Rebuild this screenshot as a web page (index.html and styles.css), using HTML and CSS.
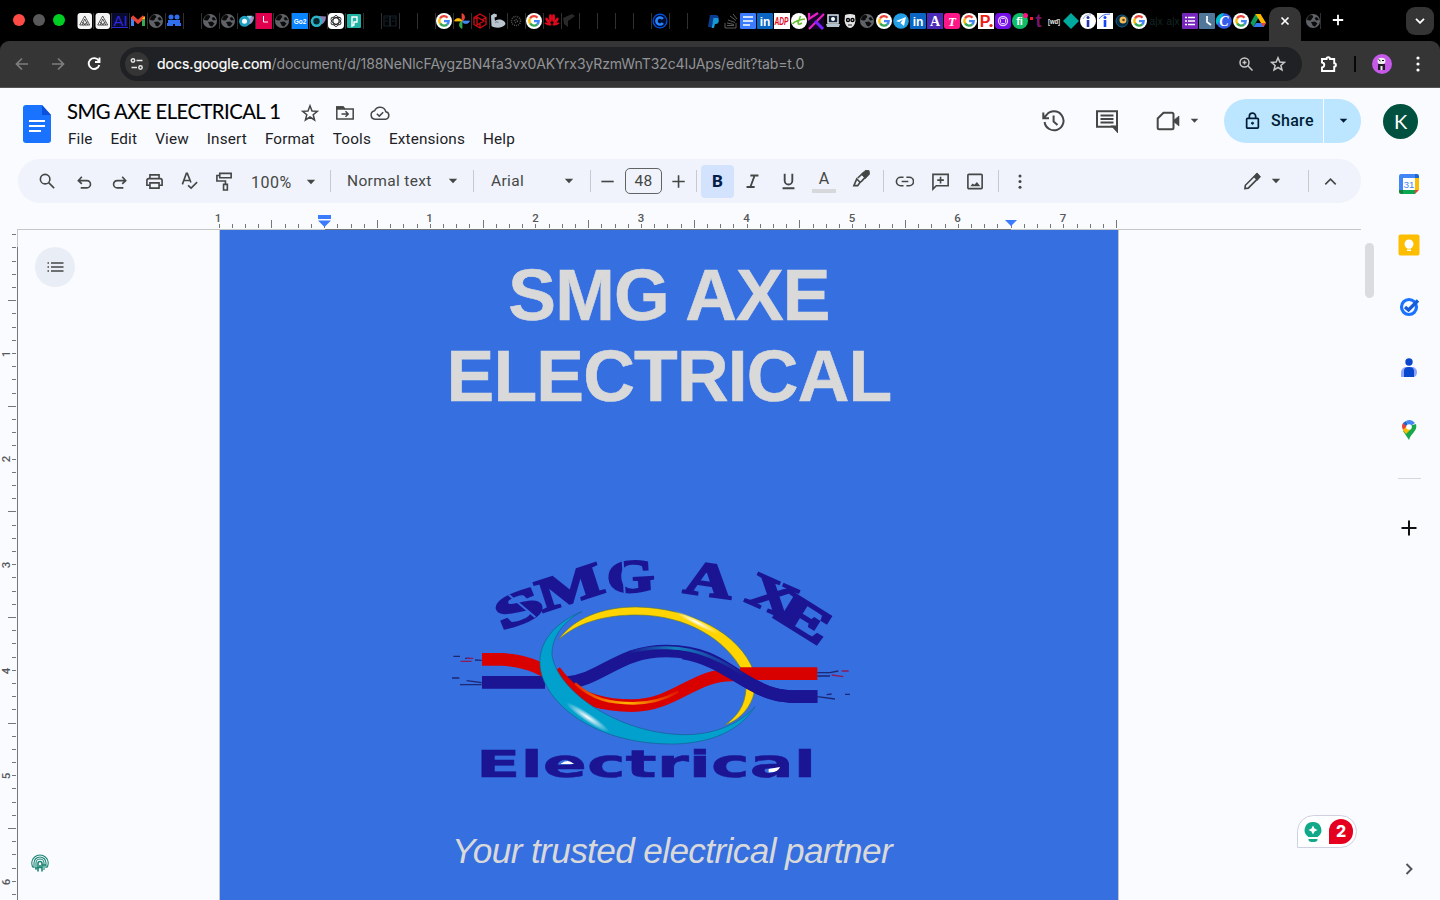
FILE: index.html
```html
<!DOCTYPE html>
<html lang="en">
<head>
<meta charset="utf-8">
<title>SMG AXE ELECTRICAL 1</title>
<link rel="stylesheet" href="styles.css">
</head>
<body>
<svg class="defs" width="0" height="0">
  <symbol id="globe" viewBox="0 0 16 16"><circle cx="8" cy="8" r="7" fill="#5f6368"/><path d="M4 2.500C7 1 9 3 8 4.500 6 6 7 8 4.500 7.500L2 7Q2 4 4 2.500ZM9.500 5L12 4 14 7 11 7.500ZM6 9L10 8.500 12.500 10.500 10 13.500 8 13Z" fill="#0b0b0b"/></symbol>
  <symbol id="goog" viewBox="0 0 16 16"><circle cx="8" cy="8" r="8" fill="#fff"/><g fill="none" stroke-width="2.300"><path d="M4 5.500A4.700 4.700 0 0 1 11.500 4.700" stroke="#ea4335"/><path d="M4.300 10.600A4.700 4.700 0 0 1 4 5.500" stroke="#fbbc05"/><path d="M11.300 11.300A4.700 4.700 0 0 1 4.200 10.500" stroke="#34a853"/><path d="M8 8.100H12.700A4.700 4.700 0 0 1 11.200 11.400" stroke="#4285f4"/></g></symbol>
  <symbol id="tri" viewBox="0 0 16 16"><rect x="1.500" width="14.500" height="16" rx="3" fill="#f4f4f4"/><path d="M8.700 3L3.700 12H13.700ZM8.700 6L6.200 12M8.700 6L11.700 12M5.700 9L9.700 12M11.700 9L7.700 12" fill="none" stroke="#333" stroke-width=".8"/></symbol>
  <symbol id="caret" viewBox="0 0 10 6"><path d="M.8.8H9.200L5 5.200Z" fill="currentColor"/></symbol>
</svg>

<header class="chrome">
  <div class="tabstrip">
    <div class="lights"><i class="red"></i><i class="grey"></i><i class="green"></i></div>
    <div class="tabs wide">
      <span><svg><use href="#tri"/></svg></span>
      <span><svg><use href="#tri"/></svg></span>
      <span><svg viewBox="0 0 16 16"><rect width="16" height="15" fill="#080a30"/><text x="8.500" y="13" class="fav" font-size="15" fill="#3028d8">AI</text><path d="M0 14.500H16" stroke="#3028d8"/></svg></span>
      <span><svg viewBox="0 0 16 16"><path d="M2.500 13V4" stroke="#4285f4" stroke-width="3"/><path d="M13.500 13V4" stroke="#34a853" stroke-width="3"/><path d="M2 3.500L8 9 14 3.500" stroke="#ea4335" stroke-width="3.200" fill="none"/><path d="M12 5.500L15 3V6H12Z" fill="#fbbc04"/></svg></span>
      <span><svg><use href="#globe"/></svg></span>
      <span><svg viewBox="0 0 16 16" fill="#2f6fed"><circle cx="5" cy="4" r="2.500"/><circle cx="11" cy="4" r="2.500"/><path d="M2 7H14V11H2ZM1 10H7V13H1ZM9 10H15V13H9Z"/></svg></span>
      <span></span>
      <span><svg><use href="#globe"/></svg></span>
      <span><svg><use href="#globe"/></svg></span>
      <span><svg viewBox="0 0 16 16"><path d="M9 3L16 3.500C16 8 13 12 9 12Z" fill="#a58fc0"/><path d="M9 2.800H14.500L10 8Z" fill="#8fdcec"/><circle cx="6.500" cy="8.300" r="4" fill="#fff" stroke="#1f9fbf" stroke-width="3"/></svg></span>
      <span><svg viewBox="0 0 16 16"><rect width="16" height="16" fill="#e0004d"/><path d="M7.500 3V9H12" stroke="#fff" fill="none"/></svg></span>
      <span><svg><use href="#globe"/></svg></span>
      <span><svg viewBox="0 0 16 16"><rect width="16" height="16" fill="#0a84ff"/><text x="8" y="10.500" class="fav bold" font-size="6.500" fill="#fff">Go2</text></svg></span>
      <span><svg viewBox="0 0 16 16"><path d="M9 3L16 3.500C16 8 13 12 9 12Z" fill="#8c7bb0"/><circle cx="6.500" cy="8.300" r="4.500" fill="#072730" stroke="#2bb5c6" stroke-width="2.600"/></svg></span>
      <span><svg viewBox="0 0 16 16"><rect width="16" height="16" rx="4" fill="#fff"/><g fill="none" stroke="#222" stroke-width=".9"><ellipse cx="8" cy="8" rx="3" ry="5.500"/><ellipse cx="8" cy="8" rx="3" ry="5.500" transform="rotate(60 8 8)"/><ellipse cx="8" cy="8" rx="3" ry="5.500" transform="rotate(120 8 8)"/></g></svg></span>
      <span><svg viewBox="0 0 16 16"><rect x="1" y="1" width="14" height="14" rx="1" fill="#21b2a6"/><path d="M6 13V4H11V9H8V12Z" fill="none" stroke="#fff" stroke-width="1.400"/></svg></span>
      <span></span>
      <span><svg viewBox="0 0 16 16"><path d="M2 3H7.500V13H2ZM8.500 3H14V13H8.500ZM3 5H6M3 8H6M10 5H13M10 8H13" fill="none" stroke="#172129" stroke-width="1.200"/></svg></span>
      <span></span><span></span>
      <span><svg><use href="#goog"/></svg></span>
      <span><svg viewBox="0 0 16 16"><path d="M8 .5A4 4 0 0 1 8 8Z" fill="#ea4335" stroke="#ea4335" stroke-width=".8"/><path d="M15.500 8A4 4 0 0 1 8 8Z" fill="#4285f4" stroke="#4285f4" stroke-width=".8"/><path d="M8 15.500A4 4 0 0 1 8 8Z" fill="#34a853" stroke="#34a853" stroke-width=".8"/><path d="M.5 8A4 4 0 0 1 8 8Z" fill="#fbbc04" stroke="#fbbc04" stroke-width=".8"/></svg></span>
      <span><svg viewBox="0 0 16 16" fill="none" stroke="#d40b12"><path d="M8 1L14 4.500V11.500L8 15 2 11.500V4.500ZM5 4V12L12 8ZM2 4.500L5 6M14 4.500L10 7M8 15V11" stroke-width="1.300"/></svg></span>
      <span><svg viewBox="0 0 16 16"><path d="M1 2.500L4 .5 7 1.500 6.500 4 4.500 4.500 5 8C8 5 15 6.500 15.500 11 13 15.500 5 15.500 1.500 13Z" fill="#bac5cf"/><path d="M5 10C7 8 8 9 8 10" stroke="#66788a" fill="none"/></svg></span>
      <span><svg viewBox="0 0 16 16" fill="none" stroke="#555" stroke-width="1.500" stroke-dasharray="1 1"><circle cx="8" cy="8" r="4.500"/><circle cx="8" cy="8" r="1.500"/></svg></span>
      <span><svg><use href="#goog"/></svg></span>
      <span><svg viewBox="0 0 16 16" fill="#e0081c"><ellipse cx="6.500" cy="5" rx="1.500" ry="4"/><ellipse cx="9.500" cy="5" rx="1.500" ry="4"/><ellipse cx="4" cy="8" rx="1.500" ry="4" transform="rotate(-35 4 8)"/><ellipse cx="12" cy="8" rx="1.500" ry="4" transform="rotate(35 12 8)"/><ellipse cx="4" cy="11" rx="3.500" ry="1.200" transform="rotate(15 4 11)"/><ellipse cx="12" cy="11" rx="3.500" ry="1.200" transform="rotate(-15 12 11)"/></svg></span>
      <span><svg viewBox="0 0 16 16"><path d="M1 5L10 1 13 3 6 8V14L2 11Z" fill="#292929"/></svg></span>
      <span></span><span></span><span></span><span></span>
      <span><svg viewBox="0 0 16 16"><circle cx="8" cy="8" r="7.500" fill="#0055e8"/><circle cx="8" cy="8" r="6.300" fill="#020e30"/><path d="M10.800 6A3.500 3.500 0 1 0 10.800 10" fill="none" stroke="#2584ff" stroke-width="2.600"/></svg></span>
      <span></span><span></span>
    </div>
    <div class="tabs">
      <span><svg viewBox="0 0 16 16"><path d="M4 2H9.500C15 2 13 10 8.500 10H6.500L5.500 14H2Z" fill="#0a3d91"/><path d="M7.500 5H12C14 9 12 11 9 11L8 15H5.500Z" fill="#1698d8"/></svg></span>
      <span><svg viewBox="0 0 16 16" fill="none" stroke="#5b5b5b"><path d="M2 10V15H13V10M4 12.500H11M4 10L11 11.500M5 7L12 9.500M7 3L13 7.500M10 1L14 6"/></svg></span>
      <span><svg viewBox="0 0 16 16"><rect width="16" height="16" rx="1" fill="#3b7cff"/><path d="M3 4H13M3 8H13M3 12H10" stroke="#fff" stroke-width="1.700"/></svg></span>
      <span><svg viewBox="0 0 16 16"><rect width="16" height="16" rx="1" fill="#0a66c2"/><text x="8" y="12.500" class="fav bold" font-size="12" fill="#fff">in</text></svg></span>
      <span><svg viewBox="0 0 16 16"><rect width="16" height="16" fill="#fff"/><text x="7.500" y="12" class="fav bold it" font-size="10" textLength="14" lengthAdjust="spacingAndGlyphs" fill="#e2061a">ADP</text></svg></span>
      <span><svg viewBox="0 0 16 16"><circle cx="8" cy="8" r="8" fill="#fff"/><path d="M1.500 11Q5 7 14 6M9.500 3L7 10Q7 12.500 11 10" fill="none" stroke="#6abf2e" stroke-width="1.500"/></svg></span>
      <span><svg viewBox="0 0 16 16"><rect width="16" height="16" fill="#15032b"/><path d="M1 0V6L10 0M1 16L16 1" stroke="#e621be" stroke-width="2.200" fill="none"/><path d="M7 8L15 16" stroke="#7a20ff" stroke-width="3"/></svg></span>
      <span><svg viewBox="0 0 16 16"><rect x="3" y="2" width="10" height="8" fill="#142235" stroke="#dbe4ec" stroke-width="1.500"/><circle cx="8" cy="6" r="2" fill="#fff"/><path d="M1 11H15L14 14H2Z" fill="#b6c4d0"/></svg></span>
      <span><svg viewBox="0 0 16 16"><path d="M3 2Q8 0 13 2L13.500 8Q12 15 8 15T2.500 8Z" fill="#e4e4e4"/><circle cx="6" cy="7" r="2.200"/><circle cx="10.500" cy="7" r="2.200"/><circle cx="6" cy="7" r=".8" fill="#fff"/><circle cx="10.500" cy="7" r=".8" fill="#fff"/><path d="M6 12H10" stroke="#222"/></svg></span>
      <span><svg><use href="#globe"/></svg></span>
      <span><svg><use href="#goog"/></svg></span>
      <span><svg viewBox="0 0 16 16"><circle cx="8" cy="8" r="7.800" fill="#229fe7"/><path d="M3 8L13 4 11 13 7.500 10 10 6.500 6 9Z" fill="#fff"/></svg></span>
      <span><svg viewBox="0 0 16 16"><rect width="16" height="16" rx="1" fill="#0a66c2"/><text x="8" y="12.500" class="fav bold" font-size="12" fill="#fff">in</text></svg></span>
      <span><svg viewBox="0 0 16 16"><rect width="16" height="16" fill="#4b2bb5"/><text x="8" y="13" class="fav serif bold" font-size="14" fill="#fff">A</text></svg></span>
      <span><svg viewBox="0 0 16 16"><rect width="16" height="16" rx="3" fill="#ff1688"/><text x="8" y="12.500" class="fav serif bold it" font-size="13" fill="#fff">T</text></svg></span>
      <span><svg><use href="#goog"/></svg></span>
      <span><svg viewBox="0 0 16 16"><rect width="16" height="16" fill="#fff"/><text x="7" y="14" class="fav bold" font-size="16" fill="#f01b16">P</text><circle cx="13" cy="12.500" r="1.600" fill="#f01b16"/></svg></span>
      <span><svg viewBox="0 0 16 16"><rect width="16" height="16" rx="4" fill="#7410e7"/><circle cx="8" cy="8" r="4.500" fill="none" stroke="#e4cbff" stroke-width="1.300"/><rect x="5.500" y="5.500" width="5" height="5" rx="1" fill="none" stroke="#e4cbff"/></svg></span>
      <span><svg viewBox="0 0 16 16"><circle cx="8" cy="8" r="8" fill="#12bd69"/><text x="7.500" y="12" class="fav bold" font-size="11" fill="#fff">fi</text><circle cx="13.500" cy="2.500" r="2.500" fill="#ff1486"/></svg></span>
      <span><svg viewBox="0 0 16 16"><text x="9.500" y="14" class="fav bold" font-size="18" fill="#75166b">t</text><rect x="1" y="4" width="3" height="3" fill="#ff1930"/></svg></span>
      <span><svg viewBox="0 0 16 16"><text x="8" y="10.500" class="fav bold" font-size="7.500" textLength="12" lengthAdjust="spacingAndGlyphs" fill="#eee">[wd]</text></svg></span>
      <span><svg viewBox="0 0 16 16"><path d="M8 0L16 8 8 16 0 8Z" fill="#00a99d"/></svg></span>
      <span><svg viewBox="0 0 16 16"><circle cx="8" cy="8" r="8" fill="#fff"/><path d="M8 7V14" stroke="#2535ae" stroke-width="2.600"/><circle cx="8" cy="4.500" r="1.500" fill="#2535ae"/><path d="M3 6Q5 1 11 2" fill="none" stroke="#8d96d4" stroke-width=".8"/></svg></span>
      <span><svg viewBox="0 0 16 16"><rect width="16" height="16" fill="#fff"/><path d="M8 7V14" stroke="#1447f4" stroke-width="2.600"/><circle cx="8" cy="4.500" r="1.500" fill="#1447f4"/><path d="M2 6Q5 1 13 1" fill="none" stroke="#1447f4" stroke-width=".8"/></svg></span>
      <span><svg viewBox="0 0 16 16"><circle cx="8" cy="8" r="6" fill="#072b45" stroke="#176089"/><circle cx="9" cy="7" r="3.500" fill="#f3bf5a"/><circle cx="9.500" cy="7" r="1.300" fill="#714012"/></svg></span>
      <span><svg><use href="#goog"/></svg></span>
      <span><svg viewBox="0 0 16 16"><text x="8" y="12" class="fav" font-size="10" fill="#152726">a|x</text></svg></span>
      <span><svg viewBox="0 0 16 16"><text x="8" y="12" class="fav" font-size="10" fill="#152726">a|x</text></svg></span>
      <span><svg viewBox="0 0 16 16"><rect width="16" height="16" rx="1" fill="#7627bb"/><path d="M3 4.500H5M3 8H5M3 11.500H5M6 4.500H13M6 8H13M6 11.500H13" stroke="#fff" stroke-width="1.500"/></svg></span>
      <span><svg viewBox="0 0 16 16"><rect width="16" height="16" rx="1" fill="#50779a"/><path d="M8 3V9L12 12" stroke="#fff" stroke-width="1.700" fill="none"/></svg></span>
      <span><svg viewBox="0 0 16 16"><circle cx="8" cy="8" r="7.800" fill="#355eea"/><path d="M8 .2A7.800 7.800 0 0 0 1 12Z" fill="#00bccb"/><text x="8" y="13" class="fav serif bold it" font-size="14" fill="#fff">C</text></svg></span>
      <span><svg><use href="#goog"/></svg></span>
      <span><svg viewBox="0 0 16 16"><path d="M5.500 1H10.500L3.500 14 .5 10Z" fill="#0f9d58"/><path d="M5.500 1H10.500L16 10H11Z" fill="#ffba00"/><path d="M3.500 14L6 10H16L13.500 14Z" fill="#3778ee"/><path d="M11 10H16L13.500 14Z" fill="#ea4335"/></svg></span>
    </div>
    <div class="activetab"><svg viewBox="0 0 10 10" width="10" height="10"><path d="M1.500 1.500L8.500 8.500M8.500 1.500L1.500 8.500" stroke="#fff" stroke-width="1.700"/></svg></div>
    <div class="tabs tail"><span><svg><use href="#globe"/></svg></span></div>
    <svg class="newtab" viewBox="0 0 12 12"><path d="M6 .8V11.200M.8 6H11.200" stroke="#fff" stroke-width="1.800"/></svg>
    <div class="tabmenu"><svg viewBox="0 0 10 6" width="10" height="6"><path d="M1 .8L5 4.800 9 .8" fill="none" stroke="#fff" stroke-width="1.800"/></svg></div>
  </div>
  <div class="navbar">
    <svg class="nav" viewBox="0 0 16 16"><path d="M14 8H2.500M8 2.500L2.500 8 8 13.500" stroke="#7e7e7e"/></svg>
    <svg class="nav fwd" viewBox="0 0 16 16"><path d="M2 8H13.500M8 2.500L13.500 8 8 13.500" stroke="#7e7e7e"/></svg>
    <svg class="nav rel" viewBox="0 0 16 16"><path d="M12.600 4.500A5.400 5.400 0 1 0 13.300 9M13.500 1.500V6H9" stroke="#fff" stroke-width="1.900"/></svg>
    <div class="omnibox">
      <div class="tune"><svg viewBox="0 0 14 14" width="14" height="14" fill="none" stroke="#e6e6e6" stroke-width="1.500"><circle cx="3" cy="3.500" r="1.700"/><path d="M6.500 3.500H12.500M1.500 10.500H7"/><circle cx="10.500" cy="10.500" r="1.700"/></svg></div>
      <div class="url"><b>docs.google.com</b><span>/document/d/188NeNlcFAygzBN4fa3vx0AKYrx3yRzmWnT32c4IJAps/edit?tab=t.0</span></div>
      <svg class="ob" viewBox="0 0 16 16"><circle cx="6.500" cy="6.500" r="4.500"/><path d="M9.800 9.800L14.500 14.500M4.500 6.500H8.500M6.500 4.500V8.500"/></svg>
      <svg class="ob" viewBox="0 0 16 16"><path d="M8 1.800L9.800 6.100 14.400 6.400 10.900 9.400 12 14 8 11.500 4 14 5.100 9.400 1.600 6.400 6.200 6.100Z"/></svg>
    </div>
    <svg class="puzzle" viewBox="0 0 18 18"><path d="M2 4H6.500A1.700 1.700 0 0 1 10 4H14.200V8.200A1.700 1.700 0 0 1 14.200 11.600V16H2V12.500C5 12 5 8 2 7.500Z" fill="none" stroke="#fff" stroke-width="1.900"/></svg>
    <i class="vbar"></i>
    <svg class="panda" viewBox="0 0 20 20"><circle cx="10" cy="10" r="10" fill="#c659ea"/><ellipse cx="9.500" cy="7" rx="4" ry="3.300" fill="#eee"/><path d="M6 10H13V16H6Z" fill="#241b28"/><path d="M8.500 12H10.500V16H8.500Z" fill="#eee"/><path d="M6.500 5.500L8.500 7M10 6.500H12" stroke="#111"/></svg>
    <svg class="dots" viewBox="0 0 4 16" fill="#fff"><circle cx="2" cy="2" r="1.600"/><circle cx="2" cy="8" r="1.600"/><circle cx="2" cy="14" r="1.600"/></svg>
  </div>
</header>

<div class="dochead">
  <svg class="doclogo" viewBox="0 0 28 38"><path d="M3 0H19L28 10V35A3 3 0 0 1 25 38H3A3 3 0 0 1 0 35V3A3 3 0 0 1 3 0Z" fill="#1a73ff"/><path d="M19 0L28 10H19Z" fill="#0b50d8"/><path d="M6 16H22M6 21H22M6 26H18" stroke="#fff" stroke-width="2"/></svg>
  <div class="titles">
    <div class="titlerow">
      <h1>SMG AXE ELECTRICAL 1</h1>
      <svg viewBox="0 0 20 20"><path d="M10 2.800L12 8 17.300 8.300 13.200 11.700 14.600 17 10 14 5.400 17 6.800 11.700 2.700 8.300 8 8Z"/></svg>
      <svg viewBox="0 0 20 20"><path d="M1.800 4H8L10 6H18.200V16H1.800Z"/><path d="M1.800 4H8L9 6H1.800Z" fill="#444746"/><path d="M6.500 11H13M10.500 8.300L13.200 11 10.500 13.700"/></svg>
      <svg viewBox="0 0 22 20" class="cloud"><path d="M6 16.200H16.500A3.800 3.800 0 0 0 16.800 8.700 6 6 0 0 0 5.600 7.700 4.300 4.300 0 0 0 6 16.200ZM7.800 10.800L10.300 13.100 14.200 9.200"/></svg>
    </div>
    <nav><span>File</span><span>Edit</span><span>View</span><span>Insert</span><span>Format</span><span>Tools</span><span>Extensions</span><span>Help</span></nav>
  </div>
  <div class="actions">
    <svg class="hist" viewBox="0 0 24 24"><path d="M3.600 13A9.500 9.500 0 1 0 5.500 6L2.500 9M2.300 3.500V9.200H8M12.600 6.500V12.500L16.500 16"/></svg>
    <svg class="comm" viewBox="0 0 24 24"><path d="M2 2.200H22V21L18.500 17.800H2Z"/><path d="M5.500 6.500H18.500M5.500 10H18.500M5.500 13.500H18.500"/><path d="M18 17.500H22V22Z" fill="#444746"/></svg>
    <svg class="meet" viewBox="0 0 24 24"><path d="M7.500 3.800H16A1.500 1.500 0 0 1 17.500 5.300V18.700A1.500 1.500 0 0 1 16 20.200H3.200A1.500 1.500 0 0 1 1.700 18.700V9.500Z"/><path d="M18 11L23 7V17L18 13Z" fill="#444746" stroke-width=".6"/></svg>
    <svg class="car" width="9" height="5.500"><use href="#caret"/></svg>
  </div>
  <div class="share"><div class="sharemain"><svg viewBox="0 0 16 20" width="15" height="18" fill="none" stroke="#001d35" stroke-width="1.900"><rect x="1.500" y="7" width="13" height="11" rx="1"/><path d="M4.500 7V4.800A3.500 3.500 0 0 1 11.500 4.800V7"/><circle cx="8" cy="12.500" r="1.200" fill="#001d35" stroke-width="1"/></svg><span>Share</span></div><div class="sharemore"><svg width="9" height="5.500"><use href="#caret"/></svg></div></div>
  <div class="avatar">K</div>
</div>

<div class="body">
 <main>
  <div class="toolbar">
    <div class="t w36"><svg viewBox="0 0 20 20"><circle cx="7.500" cy="7.500" r="5"/><path d="M11.200 11.200L17 17"/></svg></div>
    <div class="t w38 low"><svg viewBox="0 0 20 20"><path d="M4 8H12.500A3.800 3.800 0 0 1 12.500 15.600H6M7.200 4L3.500 8 7.200 11.500"/></svg></div>
    <div class="t w34 low"><svg viewBox="0 0 20 20"><path d="M15 8H6.500A3.800 3.800 0 0 0 6.500 15.600H13M11.800 4L15.500 8 11.800 11.500"/></svg></div>
    <div class="t w34"><svg viewBox="0 0 20 20"><path d="M5.200 7V3H14.800V7M5.200 14H2V9A2 2 0 0 1 4 7H16A2 2 0 0 1 18 9V14H14.800M5.200 11.500H14.800V17H5.200Z"/></svg></div>
    <div class="t w36"><svg viewBox="0 0 20 20"><path d="M2.500 13L6.700 1.500H7.700L11.500 11M4.200 9H10.500M8.500 14L11.700 17 18 10.700"/></svg></div>
    <div class="t w34"><svg viewBox="0 0 20 20"><path d="M5 1.500H17V6H5ZM5 3.700H2V9.500H11V13M9 13H13V19H9Z"/></svg></div>
    <div class="t zoomv"><span>100%</span><svg class="cr"><use href="#caret"/></svg></div><i></i>
    <div class="t style"><span>Normal text</span><svg class="cr"><use href="#caret"/></svg></div><i></i>
    <div class="t font"><span>Arial</span><svg class="cr"><use href="#caret"/></svg></div><i></i>
    <div class="t w34"><svg viewBox="0 0 20 20"><path d="M2.500 10H15.500"/></svg></div>
    <div class="size">48</div>
    <div class="t w34"><svg viewBox="0 0 20 20"><path d="M2.500 10H15.500M9 3.500V16.500"/></svg></div><i></i>
    <div class="boldbtn">B</div>
    <div class="t w37"><svg viewBox="0 0 20 20" class="heavy"><path d="M7.500 3H17M3 16.500H12.500M12.500 3L7.500 16.500"/></svg></div>
    <div class="t w34"><svg viewBox="0 0 20 20" class="heavy"><path d="M5.500 1V9A4.500 4.500 0 0 0 14.500 9V1M3 18H17"/></svg></div>
    <div class="t w38 colr"><span>A</span><b></b></div>
    <div class="t w36 up"><svg viewBox="0 0 20 20"><path d="M2 17.500L5 10.500 8.500 14 6 17.500ZM6 9.500L12 4 15.500 7 10.500 12.500 8.500 14"/><path d="M10 5.500L14 1.500 18 1.800 18.300 5.500 14 10Z" fill="#444746" stroke-width="1"/></svg></div><i class="s4"></i>
    <div class="t w40"><svg viewBox="0 0 20 20"><path d="M9 5.500H6A4.500 4.500 0 0 0 6 14.500H9M12 5.500H15A4.500 4.500 0 0 1 15 14.500H12M7 10H14"/></svg></div>
    <div class="t w34"><svg viewBox="0 0 20 20"><path d="M1 18V2.500H17V14.500H4.500ZM9 5V12M5.500 8.500H12.500"/></svg></div>
    <div class="t w34"><svg viewBox="0 0 20 20"><rect x="2" y="2.500" width="15" height="15" rx="1"/><path d="M4.500 15L7 12 8.800 13.500 11.500 10.500 15 15Z" fill="#444746" stroke="none"/></svg></div><i class="s3"></i>
    <div class="t w42"><svg viewBox="0 0 4 16" class="more"><circle cx="2" cy="2" r="1.600"/><circle cx="2" cy="8" r="1.600"/><circle cx="2" cy="14" r="1.600"/></svg></div>
    <div class="t edit"><svg viewBox="0 0 20 20"><path d="M2 17.500L2.500 14 12.500 4 15.500 7 5.500 17ZM12.500 4L14.500 2 17.500 5 15.500 7"/><path d="M12 5L15 2 17.500 5 15 8Z" fill="#444746"/></svg><svg class="cr"><use href="#caret"/></svg></div><i></i>
    <div class="t w42"><svg viewBox="0 0 20 20"><path d="M4.500 13L10 7.500 15.500 13"/></svg></div>
  </div>
  <svg class="hruler" viewBox="0 0 1361 27" width="1361" height="27">
    <path d="M218.600 23H1117" stroke="#747775" stroke-width="4" stroke-dasharray="1 12.200" shape-rendering="crispEdges"/>
    <path d="M271.400 21H1118" stroke="#747775" stroke-width="8" stroke-dasharray="1 104.600" shape-rendering="crispEdges"/>
    <path d="M17 26.500H1361" stroke="#c4c7c5"/><path d="M325 26.500H1011" stroke="#747775"/>
    <path d="M318 12H331V16H318ZM318 17.500H331L324.500 24ZM1005 17H1017L1011 23Z" fill="#3b7cff"/>
    <g class="rn"><text x="218" y="19">1</text><text x="429.500" y="19">1</text><text x="535.500" y="19">2</text><text x="641" y="19">3</text><text x="746.500" y="19">4</text><text x="852" y="19">5</text><text x="957.500" y="19">6</text><text x="1063" y="19">7</text></g>
  </svg>
  <div class="work">
    <svg class="vruler" viewBox="0 0 18 670" width="18" height="670">
      <path d="M14 4.100V670" stroke="#747775" stroke-width="4" stroke-dasharray="1 12.200" shape-rendering="crispEdges"/>
      <path d="M12 70.100V670" stroke="#747775" stroke-width="8" stroke-dasharray="1 104.600" shape-rendering="crispEdges"/>
      <path d="M17.500 17V670" stroke="#747775"/><path d="M17.500 0V17" stroke="#c4c7c5"/>
      <g class="rn"><text transform="translate(10 124) rotate(-90)">1</text><text transform="translate(10 229) rotate(-90)">2</text><text transform="translate(10 335) rotate(-90)">3</text><text transform="translate(10 441) rotate(-90)">4</text><text transform="translate(10 546) rotate(-90)">5</text><text transform="translate(10 652) rotate(-90)">6</text></g>
    </svg>
    <div class="gutter">
      <div class="outline"><svg viewBox="0 0 18 12" width="18" height="12" stroke="#444746" stroke-width="1.700"><path d="M1.500 2H3M1.500 6H3M1.500 10H3M5 2H17.500M5 6H17.500M5 10H17.500"/></svg></div>
      <svg class="finger" viewBox="0 0 18 18" fill="none" stroke="#1b8574" stroke-width="1.100"><path d="M2 13.500A8.200 8.200 0 1 1 16 13.500M3 14V9A6 6 0 0 1 15 9V14M5 16V9A4 4 0 0 1 13 9V16"/><path d="M7 17.500V9.500A2 2 0 0 1 11 9.500V17.500M9 11V13M4 14H7M11 11H15M7 13.500H11" stroke-width="1.600"/></svg>
    </div>
    <article class="page">
      <h2>SMG AXE ELECTRICAL</h2>
      <svg class="logo" viewBox="0 0 1320 750">
        <defs>
          <radialGradient id="shine"><stop offset="0" stop-color="#fff"/><stop offset="1" stop-color="#fff" stop-opacity="0"/></radialGradient>
          <linearGradient id="orange"><stop offset="0" stop-color="#e22a00"/><stop offset=".5" stop-color="#ffb300"/><stop offset="1" stop-color="#df1300"/></linearGradient>
          <linearGradient id="gleam"><stop offset="0" stop-color="#1b1493"/><stop offset=".4" stop-color="#1583bf"/><stop offset="1" stop-color="#1b1493"/></linearGradient>
        </defs>
        <g class="arc">
          <text transform="translate(283 246) rotate(-22) scale(1.900 .98)" font-size="138">S</text>
          <text transform="translate(434 186) rotate(-18) scale(1.520 1)" font-size="140">M</text>
          <text transform="translate(604 155) rotate(-3) scale(1.320 1)" font-size="138">G</text>
          <text transform="translate(830 167) rotate(8) scale(1.450 1.040)" font-size="138">A</text>
          <text transform="translate(1009 212) rotate(24) scale(1.480 1.040)" font-size="138">X</text>
          <text transform="translate(1100 275) rotate(32) scale(1.850 1.060)" font-size="134">E</text>
        </g>
        <path d="M236 164L316 232M578 62L584 160" stroke="#356fe0" stroke-width="6"/>
        <path d="M387 298C430 235 520 200 620 201C780 203 930 280 972 395L938 395C890 300 770 225 620 225C520 225 440 250 387 298ZM948 445L973 455C965 500 930 540 885 555C920 530 945 500 948 445Z" fill="#ffd400" stroke="#5e7a3b" stroke-width="2"/>
        <ellipse cx="800" cy="247" rx="75" ry="9" transform="rotate(27 800 247)" fill="url(#shine)"/>
        <g fill="none" stroke-width="38">
          <path d="M156 427H345M400 430C520 420 560 333 710 333C840 333 890 390 960 430C1010 460 1050 470 1100 470H1162" stroke="#1b1493"/>
          <path d="M156 358H215C300 362 350 392 395 430C450 478 530 497 605 497C740 495 790 402 910 405M930 401H1162" stroke="#d90000"/>
          <path d="M375 392C410 440 450 475 520 489" stroke="#d90000" stroke-width="36"/>
          <path d="M760 339C860 358 900 400 960 430C1010 460 1050 470 1100 470H1162" stroke="#1b1493"/>
        </g>
        <path d="M435 430C490 480 540 490 610 490C670 490 710 475 745 455" fill="none" stroke="url(#orange)" stroke-width="8"/>
        <path d="M595 338C660 318 760 315 840 350S905 385 945 405" fill="none" stroke="url(#gleam)" stroke-width="9"/>
        <path d="M455 215C370 250 325 310 330 375C335 470 470 615 735 612C850 608 930 570 975 500C920 560 840 585 760 584C560 580 380 450 366 345C365 290 400 245 455 215Z" fill="#02a0cc" stroke="#155f90" stroke-width="2"/>
        <ellipse cx="473" cy="532" rx="78" ry="13" transform="rotate(34 473 532)" fill="url(#shine)"/>
        <g fill="none" stroke-width="4"><path d="M70 349H90M105 355H120M135 360L155 361M66 414H88M110 422L155 428M90 434H155M1162 398H1200L1225 393M1162 408H1200M1162 470L1215 477M1190 464L1205 462M1245 463H1260" stroke="#1d2776"/><path d="M92 364H125M110 355H130M1235 393H1256M1205 405L1240 410" stroke="#8c1b5a"/></g>
        <text x="138" y="710" class="elec" font-size="112" textLength="1020" lengthAdjust="spacingAndGlyphs">Electrical</text>
        <path d="M392 672Q412 654 432 672ZM1016 697V687L1050 681Q1045 698 1016 697Z" fill="#fff"/>
      </svg>
      <p>Your trusted electrical partner</p>
    </article>
    <div class="right"><div class="pill"><svg viewBox="0 0 18 20" width="18" height="20"><path d="M9 0A8 8 0 0 1 14 14.500V15H4V14.500A8 8 0 0 1 9 0ZM4.500 17H13.500V18Q13 20 9 20T4.500 18Z" fill="#11a989"/><path d="M9 3.500L10.500 6.500 13.500 8 10.500 9.500 9 12.500 7.500 9.500 4.500 8 7.500 6.500Z" fill="#fff"/></svg><b>2</b></div></div>
  </div>
 </main>
 <div class="scroll"><i></i></div>
 <aside>
  <svg viewBox="0 0 22 22"><rect x="1" y="1" width="20" height="20" rx="2" fill="#fff"/><path d="M1 16V3A2 2 0 0 1 3 1H17V5H5V17H1Z" fill="#4285f4"/><path d="M17 1H19A2 2 0 0 1 21 3V5H17Z" fill="#1967d2"/><path d="M17 5H21V17H17Z" fill="#fbbc04"/><path d="M5 17H17V21H5Z" fill="#0ca750"/><path d="M1 17H5V21H3A2 2 0 0 1 1 19Z" fill="#188038"/><path d="M17 17H21L17 21Z" fill="#ea4335"/><text x="11" y="14.500" class="fav" font-size="9.500" fill="#4285f4">31</text></svg>
  <svg viewBox="0 0 22 22"><rect x=".5" y=".5" width="21" height="21" rx="2" fill="#fdbd00"/><circle cx="11" cy="10" r="4.500" fill="#fff"/><path d="M9 13H13V14.500H9ZM9 15.500H13V17H9Z" fill="#fff"/></svg>
  <svg viewBox="0 0 22 22"><circle cx="11" cy="11" r="7.500" fill="none" stroke="#1a73ff" stroke-width="3.200"/><path d="M7 11L10.500 14 20 4.500" fill="none" stroke="#165bd8" stroke-width="3.300"/></svg>
  <svg viewBox="0 0 22 22"><circle cx="11" cy="5" r="3.700" fill="#0847cd"/><path d="M3 20V15A5.500 5.500 0 0 1 8.500 10H14A5 5 0 0 1 19 15Q19 20 15 20Z" fill="#8ca4ff"/><path d="M6 20V14Q6 10 11 10T16 14V20Z" fill="#0847cd"/></svg>
  <svg viewBox="0 0 22 22" class="maps"><path d="M5 12L11 7 18 5C20 12 13 14 11 21Z" fill="#17a84b"/><path d="M8 2Q13-1 17 4L11 8Z" fill="#4285f4"/><path d="M5 4L8 2 11 8 7 10Z" fill="#1967d2"/><path d="M5 4Q3 7 5 11L9 8Z" fill="#ea4335"/><path d="M5 11L9 7 13 10 8 15Z" fill="#fbbc04"/><circle cx="11" cy="8" r="2.800" fill="#fff"/></svg>
  <hr>
  <svg class="plus" viewBox="0 0 16 16"><path d="M8 .5V15.500M.5 8H15.500" stroke="#111" stroke-width="2"/></svg>
  <svg class="chev" viewBox="0 0 8 12"><path d="M1.500 1L6.500 6 1.500 11" fill="none" stroke="#50545a" stroke-width="1.900"/></svg>
 </aside>
</div>
</body>
</html>
```
FILE: styles.css
```css
* { box-sizing: border-box; }
body { margin: 0; width: 1440px; height: 900px; overflow: hidden; background: #fafbff; font-family: Roboto, "Liberation Sans", sans-serif; color: #444746; }
svg { display: block; flex: none; }
.defs { display: block; height: 0; }
.fav { font-family: "Liberation Sans", sans-serif; text-anchor: middle; }
.bold { font-weight: 700; }
.it { font-style: italic; }
.serif { font-family: "Liberation Serif", serif; }

/* browser frame */
.chrome { height: 88px; background: #000; }
.tabstrip { display: flex; height: 41px; }
.lights { display: flex; gap: 8px; width: 75px; padding: 14px 0 0 13px; }
.lights i { width: 12px; height: 12px; border-radius: 50%; }
.red { background: #ff4b45; }
.grey { background: #59595b; }
.green { background: #00ce23; }
.tabs { display: flex; padding-top: 13px; }
.tabs span { width: 17px; height: 16px; }
.tabs.wide span { width: 18px; border-left: 1px solid #303030; }
.tabs.wide span:first-child { border-color: transparent; }
.tabs.wide + .tabs { padding-left: 1px; }
.tabs svg { width: 16px; height: 16px; overflow: visible; }
.activetab { display: flex; align-items: center; justify-content: center; width: 32px; height: 34px; margin: 7px 0 0 2px; padding-bottom: 6px; border-radius: 10px 10px 0 0; background: #353535; }
.tabs.tail { padding-left: 4px; }
.tabs.tail span { width: 16px; height: 16px; overflow: hidden; border-right: 1px solid #303030; }
.newtab { width: 12px; height: 12px; margin: 14px 0 0 11px; }
.tabmenu { display: flex; align-items: center; justify-content: center; width: 28px; height: 28px; margin: 7px 6px 0 auto; border-radius: 9px; background: #353535; }
.navbar { display: flex; align-items: center; height: 47px; border-radius: 9px 9px 0 0; border-bottom: 1px solid #545454; background: #353535; }
.nav { width: 16px; height: 16px; margin-left: 14px; fill: none; stroke-width: 1.700; }
.nav.fwd { margin-left: 20px; }
.nav.rel { margin-left: 20px; }
.omnibox { display: flex; align-items: center; width: 1182px; height: 34px; margin-left: 18px; padding: 0 16px 0 5px; border-radius: 17px; background: #202124; }
.tune { display: flex; align-items: center; justify-content: center; width: 24px; height: 24px; border-radius: 50%; background: #353535; }
.url { flex: 1; padding: 0 0 1px 8px; font: 14px Inter, sans-serif; color: #929396; white-space: nowrap; }
.url span { letter-spacing: -.1px; }
.url b { font-weight: 400; color: #fff; -webkit-text-stroke: .2px #fff; }
.ob { width: 16px; height: 16px; margin-left: 16px; fill: none; stroke: #c7c7c7; stroke-width: 1.500; }
.puzzle { width: 18px; height: 18px; margin-left: 18px; }
.vbar { width: 2px; height: 16px; margin-left: 16px; background: #080808; }
.panda { width: 20px; height: 20px; margin-left: 16px; }
.dots { width: 4px; height: 16px; margin-left: 24px; }

/* document header */
.dochead { display: flex; height: 71px; }
.doclogo { width: 28px; height: 38px; margin: 17px 0 0 23px; }
.titles { width: 976px; padding: 13px 0 0 16px; }
.titlerow { display: flex; align-items: center; height: 23px; }
.titlerow h1 { width: 214px; margin: -3px 0 0; font: 20.300px/23px Lato, sans-serif; letter-spacing: -.55px; color: #000; -webkit-text-stroke: .1px #000; white-space: nowrap; }
.titlerow svg { width: 20px; height: 20px; margin-left: 19px; fill: none; stroke: #444746; stroke-width: 1.500; }
.titlerow svg + svg { margin-left: 15px; }
.titlerow svg.cloud { width: 22px; margin-left: 14px; }
.titles nav { display: flex; gap: 18px; padding-left: 1px; margin-top: 5px; font-size: 15.300px; line-height: 20px; letter-spacing: .15px; color: #202124; }
.actions { display: flex; align-items: center; height: 66px; width: 197px; padding-left: 14px; }
.actions svg { width: 24px; height: 24px; fill: none; stroke: #444746; stroke-width: 2; }
.actions .comm { margin-left: 30px; }
.actions .meet { margin-left: 37px; }
.actions .car { width: 9px; height: 5.500px; margin-left: 10px; stroke: none; }
.share { display: flex; gap: 1px; width: 137px; height: 44px; margin-top: 11px; overflow: hidden; border-radius: 22px; color: #001d35; }
.sharemain { display: flex; align-items: center; gap: 11px; width: 99px; padding: 0 0 1px 21px; background: #bce6ff; font-size: 16px; font-weight: 500; letter-spacing: .3px; }
.sharemore { display: flex; flex: 1; align-items: center; padding-left: 15px; background: #bce6ff; }
.avatar { width: 35px; height: 35px; margin: 16px 0 0 22px; border-radius: 50%; background: #00513f; color: #fff; font: 20px/34px Lato, sans-serif; text-align: center; }

/* editor */
.body { display: flex; height: 741px; }
main { width: 1361px; }
.toolbar { display: flex; align-items: center; height: 44px; margin-left: 18px; padding-left: 11px; border-radius: 22px; background: #f0f3fb; }
.t { display: flex; align-items: center; justify-content: center; height: 34px; font-size: 15.500px; letter-spacing: .15px; white-space: nowrap; }
.t svg { width: 19px; height: 19px; fill: none; stroke: #444746; stroke-width: 1.700; }
.t svg.heavy { width: 17px; height: 17px; stroke-width: 2.200; }
.t svg.more { width: 4px; height: 15px; fill: #444746; stroke: none; }
.t svg.cr { width: 10px; height: 6px; margin-left: auto; stroke: none; }
.toolbar > i { width: 1px; height: 22px; background: #c7c9cc; }
.toolbar > i.s3 { margin-left: 6px; }
.toolbar > i.s4 { margin-left: 4px; }
.w34 { width: 34px; } .w36 { width: 36px; } .w37 { width: 37px; } .w38 { width: 38px; } .w40 { width: 40px; } .w42 { width: 42px; }
.low { padding-top: 3px; }
.up { padding-bottom: 5px; }
.zoomv { width: 89px; padding: 2px 14px 0 10px; font-size: 16px; letter-spacing: .5px; }
.style { width: 142px; padding: 0 15px 0 16px; letter-spacing: .35px; }
.font { width: 116px; padding: 0 16px 0 17px; letter-spacing: .35px; }
.size { width: 37px; height: 26px; border: 1px solid #606462; border-radius: 5px; font-size: 15.500px; line-height: 25px; text-align: center; letter-spacing: .3px; }
.boldbtn { width: 33px; height: 33px; margin-left: 4px; border-radius: 4px; background: #d3e3fd; color: #041e49; font-size: 17px; font-weight: 800; line-height: 33px; text-align: center; }
.colr { flex-direction: column; font-size: 16px; line-height: 18px; }
.colr b { width: 24px; height: 4px; background: #d6d8db; }
.colr span { margin-bottom: 1px; }
.edit { width: 79px; padding: 0 25px 0 11px; margin-left: auto; }
.toolbar .edit svg.cr { margin-left: 9px; }
.toolbar > .w42:last-child { margin-right: 10px; }
.hruler { height: 27px; }
.rn { font: 500 11.500px Roboto, sans-serif; fill: #55585a; text-anchor: middle; }
.work { display: flex; height: 670px; }
.gutter { display: flex; flex-direction: column; align-items: flex-start; width: 201px; padding: 17px 0 28px 17px; }
.outline { display: flex; align-items: center; justify-content: center; width: 40px; height: 40px; border-radius: 50%; background: #e9eef6; }
.finger { width: 18px; height: 18px; margin: auto 0 0 -4px; }
.page { width: 900px; height: 670px; border-left: 1px solid #c4c7c5; border-right: 1px solid #c4c7c5; background: #356fe0; color: #d9d9d9; font-family: "Liberation Sans", sans-serif; text-align: center; }
.page h2 { width: 686px; margin: 25px auto 0; padding: 0 100px; font-size: 71.500px; line-height: 81px; letter-spacing: -.8px; -webkit-text-stroke: .6px #d9d9d9; }
.logo { width: 440px; height: 250px; margin: 123px 0 0 210px; }
.arc text { font-family: "Liberation Serif", serif; font-weight: 700; fill: #1b1493; stroke: #1b1493; stroke-width: 7px; text-anchor: middle; }
.elec { font-family: "DejaVu Sans", sans-serif; font-weight: 700; fill: #1b1493; stroke: #1b1493; stroke-width: 1.500px; }
.page p { margin: 41px 0 0 6px; font-size: 35.200px; line-height: 40px; font-style: italic; letter-spacing: -.63px; white-space: nowrap; }
.right { display: flex; flex: 1; align-items: flex-end; padding: 0 0 52px 178px; }
.pill { display: flex; align-items: center; width: 60px; height: 33px; padding-left: 6px; border: 1px solid #cfd0e2; border-radius: 17px 17px 17px 0; background: #fff; }
.pill b { width: 24px; height: 25px; margin-left: 7px; border-radius: 13px 13px 13px 0; background: #e5001f; color: #fff; font: 800 16px/25px Inter, sans-serif; text-align: center; }
.scroll { width: 17px; padding: 84px 0 0 4px; }
.scroll i { display: block; width: 9px; height: 55px; border-radius: 5px; background: #dadce0; }
aside { display: flex; flex-direction: column; align-items: center; width: 62px; padding: 14px 0 25px; }
aside > svg { width: 22px; height: 22px; margin-bottom: 39.300px; }
aside > svg.maps { margin-top: 1px; }
aside hr { width: 23px; height: 1px; margin: -2px 0 41px; border: 0; background: #d5d7dc; }
aside .plus { width: 16px; height: 16px; margin: 0; }
aside .chev { width: 8px; height: 12px; margin: auto 0 0; }
```
